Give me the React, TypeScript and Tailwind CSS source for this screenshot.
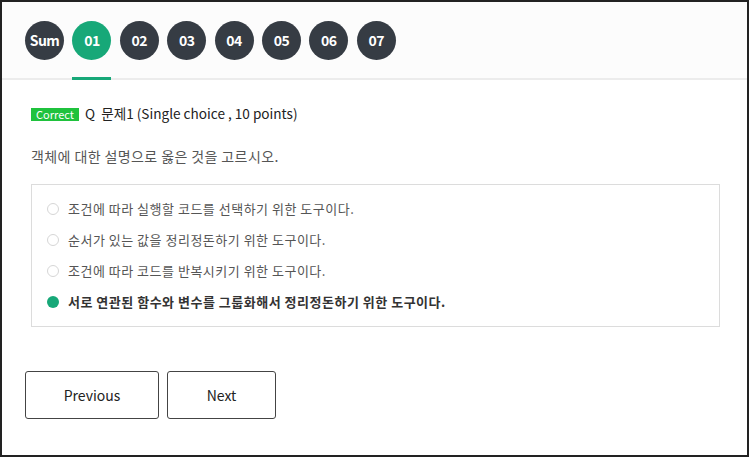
import React from "react";

const tabs = ["Sum", "01", "02", "03", "04", "05", "06", "07"];
const options = [
  "조건에 따라 실행할 코드를 선택하기 위한 도구이다.",
  "순서가 있는 값을 정리정돈하기 위한 도구이다.",
  "조건에 따라 코드를 반복시키기 위한 도구이다.",
  "서로 연관된 함수와 변수를 그룹화해서 정리정돈하기 위한 도구이다.",
];

export default function App() {
  return (
    <div
      className="w-[749px] h-[457px] border-2 border-[#222] bg-white overflow-hidden"
      style={{ fontFamily: '"Noto Sans CJK KR", "Noto Sans", sans-serif' }}
    >
      <div className="h-[78px] bg-[#fcfcfc] border-b-2 border-[#ececec] pl-[23px] flex gap-[8.4px]">
        {tabs.map((t, i) => (
          <div key={t} className="flex flex-col justify-between w-[39px] h-full">
            <div
              className={`mt-[19px] w-[39px] h-[39px] rounded-full flex items-center justify-center text-white text-[14px] font-bold tracking-[-0.5px] ${
                i === 1 ? "bg-[#17a878]" : "bg-[#363c44]"
              }`}
            >
              {t}
            </div>
            {i === 1 ? <div className="h-[3px] bg-[#17a878] mb-[-2px]" /> : <div />}
          </div>
        ))}
      </div>

      <div className="pl-[29px] pr-[28px]">
        <div className="mt-[23px] flex items-center h-[20px]">
          <span className="bg-[#1fc23d] text-white text-[11px] leading-[13px] h-[13px] w-[48px] text-center mr-[6px] mt-[2px]">
            Correct
          </span>
          <span className="text-[13.6px] text-[#222] whitespace-pre">Q  문제1 (Single choice , 10 points)</span>
        </div>
        <div className="mt-[23px] text-[14px] tracking-[0.4px] text-[#555] leading-[20px]">
          객체에 대한 설명으로 옳은 것을 고르시오.
        </div>
        <div className="mt-[18px] w-[689px] h-[143px] border border-[#dcdcdc] pl-[15px] pt-[8px]">
          {options.map((o, i) => {
            const sel = i === 3;
            return (
              <div key={i} className="h-[31px] flex items-center">
                <span
                  className={`w-[12px] h-[12px] rounded-full shrink-0 ${
                    sel ? "bg-[#17a878]" : "border border-[#d6d6d6] bg-white"
                  }`}
                />
                <span
                  className={`ml-[9px] text-[13px] tracking-[0.5px] ${
                    sel ? "font-bold text-[#333]" : "text-[#555]"
                  }`}
                >
                  {o}
                </span>
              </div>
            );
          })}
        </div>
      </div>

      <div className="pl-[23px] mt-[44px] flex gap-[8px]">
        <button className="w-[134px] h-[48px] border border-[#444] rounded-[3px] text-[14px] text-[#222] bg-white">
          Previous
        </button>
        <button className="w-[109px] h-[48px] border border-[#444] rounded-[3px] text-[14px] text-[#222] bg-white">
          Next
        </button>
      </div>
    </div>
  );
}
